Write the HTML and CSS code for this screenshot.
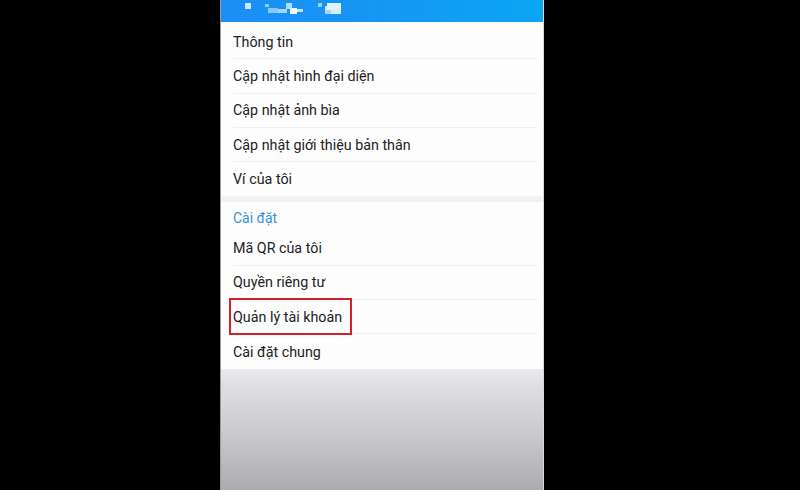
FILE: index.html
```html
<!DOCTYPE html>
<html lang="vi">
<head>
<meta charset="utf-8">
<link rel="stylesheet" href="styles.css">
</head>
<body>
<div class="stage">
  <div class="phone">
    <header class="topbar">
      <svg class="blur-name" width="110" height="22" viewBox="0 0 110 22">
        <rect x="4" y="3" width="6" height="6" fill="#c4e7fb"/>
        <rect x="24" y="4" width="4" height="3" fill="#8fcdf6"/>
        <rect x="27" y="8" width="10" height="5" fill="#86c8f4"/>
        <rect x="37" y="9" width="9" height="4" fill="#a6d6f7"/>
        <rect x="45" y="3" width="6" height="6" fill="#b0dcf8"/>
        <rect x="49" y="8" width="7" height="6" fill="#eef8fe"/>
        <rect x="56" y="9" width="6" height="3" fill="#c0e3fa"/>
        <rect x="77" y="3" width="4" height="4" fill="#98d1f6"/>
        <rect x="84" y="6" width="8" height="8" fill="#cce9fb"/>
        <rect x="86" y="3" width="14" height="7" fill="#e3f3fd"/>
        <rect x="92" y="9" width="8" height="5" fill="#d2ecfc"/>
        <rect x="84" y="10" width="6" height="4" fill="#a4d6f7"/>
      </svg>
    </header>

    <ul class="group group-first">
      <li class="row">Thông tin</li>
      <li class="row">Cập nhật hình đại diện</li>
      <li class="row">Cập nhật ảnh bìa</li>
      <li class="row">Cập nhật giới thiệu bản thân</li>
      <li class="row row-last">Ví của tôi</li>
    </ul>

    <div class="band"></div>

    <div class="section-title">Cài đặt</div>
    <ul class="group">
      <li class="row">Mã QR của tôi</li>
      <li class="row">Quyền riêng tư</li>
      <li class="row"><span class="marked">Quản lý tài khoản</span></li>
      <li class="row row-last">Cài đặt chung</li>
    </ul>

    <div class="rest"></div>
  </div>
</div>
</body>
</html>
```

FILE: styles.css
```css
* { box-sizing: border-box; }

html, body {
  margin: 0;
  padding: 0;
  background: #000;
}

body {
  width: 800px;
  height: 490px;
  overflow: hidden;
  font-family: Roboto, "Liberation Sans", Arial, sans-serif;
}

.stage {
  display: flex;
  height: 490px;
  padding-left: 220px;
}

.phone {
  width: 324px;
  height: 490px;
  display: flex;
  flex-direction: column;
  background: #fdfdfd;
  border-left: 1px solid #9a9a9c;
  border-right: 1px solid #d8d8da;
}

.topbar {
  height: 22px;
  flex: none;
  background: linear-gradient(90deg, #1b8ef4 0%, #1497f4 50%, #0ba6f3 100%);
  padding-left: 20px;
  display: flex;
  align-items: flex-start;
}

.blur-name { display: block; }

.group {
  list-style: none;
  margin: 0;
  padding: 0;
  flex: none;
}

.group-first { padding-top: 3px; }

.row {
  height: 34.3px;
  margin-left: 12px;
  margin-right: 6px;
  display: flex;
  align-items: center;
  font-size: 14.3px;
  color: #222224;
  border-bottom: 1px solid #f0f0f3;
  white-space: nowrap;
}

.row-last { border-bottom: none; }

.band {
  height: 6px;
  flex: none;
  background: linear-gradient(180deg, #f5f5f7, #efeff2);
}

.section-title {
  height: 29px;
  flex: none;
  padding-left: 12px;
  display: flex;
  align-items: center;
  padding-top: 2px;
  font-size: 14px;
  color: #3393d6;
}

.marked {
  position: relative;
}

.marked::after {
  content: "";
  position: absolute;
  left: -4px;
  right: -10px;
  top: -11px;
  bottom: -10px;
  border: 2px solid #d4202a;
}

.rest {
  flex: 1;
  background: linear-gradient(180deg, #ebeaef 0%, #e0dfe4 12%, #c9c8cd 55%, #acabb0 100%);
}
```
